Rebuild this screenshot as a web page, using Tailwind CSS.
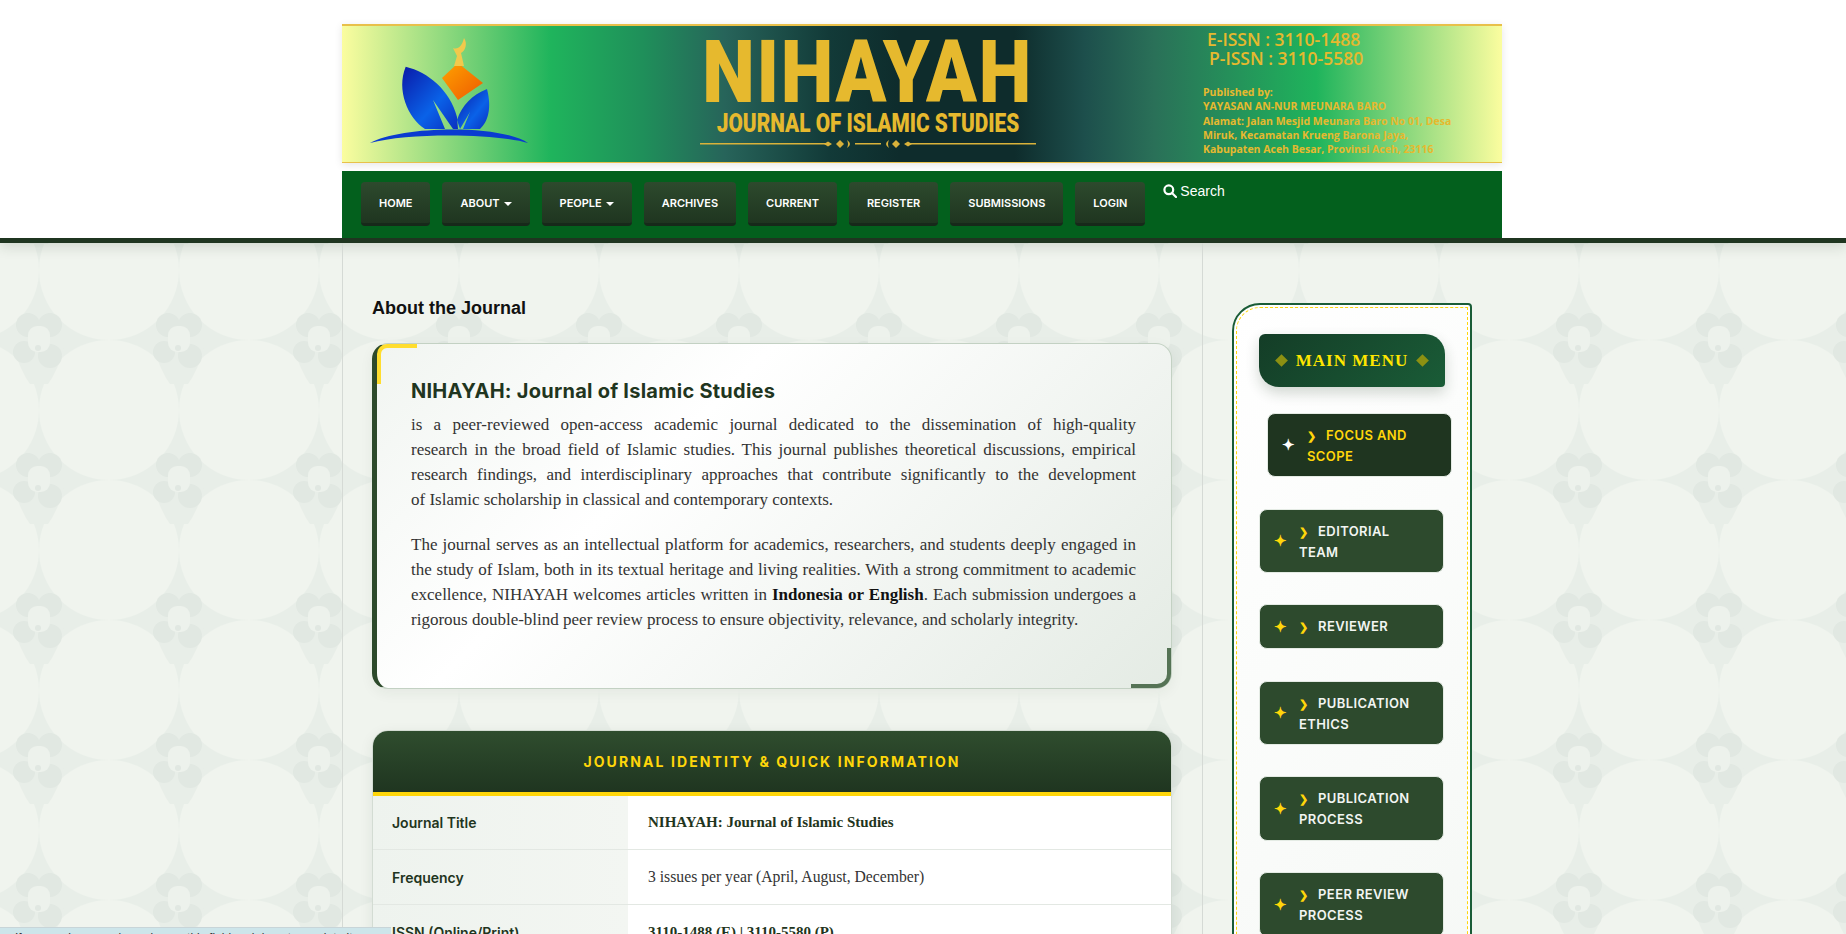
<!DOCTYPE html>
<html lang="en">
<head>
<meta charset="UTF-8">
<title>NIHAYAH: Journal of Islamic Studies</title>
<script src="https://cdn.jsdelivr.net/npm/@tailwindcss/browser@4"></script>
</head>
<body class="relative h-[934px] overflow-hidden bg-[#e8eee8] font-['Liberation_Sans',sans-serif]">

<!-- page background pattern -->
<svg class="absolute inset-0 w-full h-full" aria-hidden="true">
  <defs>
    <pattern id="bgtile" width="140" height="140" patternUnits="userSpaceOnUse">
      <g fill="#f0f4ee">
        <circle cx="109" cy="130" r="70"/>
        <circle cx="-31" cy="130" r="70"/>
        <circle cx="109" cy="-10" r="70"/>
        <circle cx="-31" cy="-10" r="70"/>
      </g>
      <path d="M14 68 Q20 90 30 104 H48 Q58 90 64 68 Z" fill="#e8eee8"/>
      <g fill="#e1e8e2">
        <circle cx="28" cy="45" r="12"/>
        <circle cx="50" cy="45" r="12"/>
        <circle cx="24" cy="72" r="11"/>
        <circle cx="50" cy="76" r="12"/>
      </g>
      <rect x="28" y="46" width="22" height="26" rx="9" fill="#edf2ec"/>
      <circle cx="38" cy="68" r="3" fill="#e1e8e2"/>
    </pattern>
  </defs>
  <rect width="100%" height="100%" fill="url(#bgtile)"/>
</svg>

<div class="relative">
  <!-- header -->
  <header class="bg-white h-[243px] border-b-[5px] border-[#1f3520] shadow-[0_4px_12px_rgba(31,53,32,0.15)]">
    <div class="w-[1160px] ml-[342px] pt-[24px]">
      <div class="h-[139px] flex border-t-[2px] border-b border-[#e8c04a] shadow-[0_2px_8px_rgba(0,0,0,0.1)] bg-[linear-gradient(90deg,#fbfd9f_0%,#1fb45c_18%,#1f8f5a_26%,#27645a_33%,#123a38_42%,#0e2c2c_48%,#0e2c2c_58%,#1d4f4c_64%,#2a7058_70%,#1fb45c_84%,#fbfd9f_100%)]">
        <svg class="ml-[8px] mt-[-6px] shrink-0" width="200" height="140" viewBox="0 0 200 140">
          <defs>
            <linearGradient id="leaf" x1="0" y1="0" x2="1" y2="1">
              <stop offset="0" stop-color="#0a1aa8"/>
              <stop offset="0.6" stop-color="#0a62e8"/>
              <stop offset="1" stop-color="#0a2fc0"/>
            </linearGradient>
            <linearGradient id="dome" x1="0" y1="0" x2="1" y2="1">
              <stop offset="0" stop-color="#ffa200"/>
              <stop offset="1" stop-color="#ee5a00"/>
            </linearGradient>
          </defs>
          <path d="M55.7 46.7 C78 52 100 70 107 97 L108 109 L103 109 L83 80 L95 109 L75 109 C58 98 46 70 55.7 46.7 Z" fill="url(#leaf)"/>
          <path d="M137 69 C142 88 138 102 130 109 L113 109 L120 92 L110 109 L107 100 C112 85 122 75 137 69 Z" fill="url(#leaf)"/>
          <path d="M20 123 C50 106 150 104 178 123 C150 114 60 112 20 123 Z" fill="#0a3bd0"/>
          <path d="M108 43 L133 63 L108 80 L92 58 Z" fill="url(#dome)"/>
          <path d="M104 46 L107 36 L103 28 C108 30 112 26 114 18 C118 24 115 31 111 33 L114 46 Z" fill="#f2c94c"/>
        </svg>
        <div class="ml-[148px] w-[340px] shrink-0 flex flex-col items-center text-[#e6b92e]">
          <div class="font-['Roboto',sans-serif] font-black text-[88px] leading-[72px] mt-[10px] tracking-[2px] whitespace-nowrap scale-x-[.85]">NIHAYAH</div>
          <div class="font-['Roboto',sans-serif] font-black text-[26px] leading-[30px] whitespace-nowrap scale-x-[.8]">JOURNAL OF ISLAMIC STUDIES</div>
          <svg width="336" height="12" viewBox="0 0 336 12" fill="#d9b23a">
            <rect x="0" y="5" width="128" height="1.5"/>
            <path d="M124 6 l4-2.5 l4 2.5 l-4 2.5Z M136 6 l4-4 l4 4 l-4 4Z M147 2 q6 4 0 8 q2-4 0-8Z M155 5 h26 v1.5 h-26Z M189 2 q-6 4 0 8 q-2-4 0-8Z M192 6 l4-4 l4 4 l-4 4Z M204 6 l4-2.5 l4 2.5 l-4 2.5Z"/>
            <rect x="208" y="5" width="128" height="1.5"/>
          </svg>
        </div>
        <div class="ml-[165px] text-[#e6b92e] font-['Open_Sans',sans-serif] font-semibold">
          <div class="pl-[4px] pt-[4px] text-[17.5px] leading-[19px]">
            <div>E-ISSN : 3110-1488</div>
            <div class="pl-[2px]">P-ISSN : 3110-5580</div>
          </div>
          <div class="mt-[17px] text-[10.5px] leading-[14.3px] font-bold">
            Published by:<br>YAYASAN AN-NUR MEUNARA BARO<br>Alamat: Jalan Mesjid Meunara Baro No 01, Desa<br>Miruk, Kecamatan Krueng Barona Jaya,<br>Kabupaten Aceh Besar, Provinsi Aceh, 23116
          </div>
        </div>
      </div>

      <!-- nav -->
      <nav class="mt-[8px] h-[67px] bg-[#03601d] flex items-start pl-[19px] pt-[11px] gap-[12px] text-white">
        <a class="h-[44px] pt-[2px] px-[18px] flex items-center rounded-[4px] border-b-[3px] border-[#17291a] bg-[linear-gradient(180deg,#2d4a2d,#1f3520)] font-['Inter',sans-serif] text-[11px] font-semibold">HOME</a>
        <a class="h-[44px] pt-[2px] px-[18px] flex items-center gap-[4px] rounded-[4px] border-b-[3px] border-[#17291a] bg-[linear-gradient(180deg,#2d4a2d,#1f3520)] font-['Inter',sans-serif] text-[11px] font-semibold">ABOUT <span class="border-t-[4px] border-x-[4px] border-x-transparent border-t-white"></span></a>
        <a class="h-[44px] pt-[2px] px-[18px] flex items-center gap-[4px] rounded-[4px] border-b-[3px] border-[#17291a] bg-[linear-gradient(180deg,#2d4a2d,#1f3520)] font-['Inter',sans-serif] text-[11px] font-semibold">PEOPLE <span class="border-t-[4px] border-x-[4px] border-x-transparent border-t-white"></span></a>
        <a class="h-[44px] pt-[2px] px-[18px] flex items-center rounded-[4px] border-b-[3px] border-[#17291a] bg-[linear-gradient(180deg,#2d4a2d,#1f3520)] font-['Inter',sans-serif] text-[11px] font-semibold">ARCHIVES</a>
        <a class="h-[44px] pt-[2px] px-[18px] flex items-center rounded-[4px] border-b-[3px] border-[#17291a] bg-[linear-gradient(180deg,#2d4a2d,#1f3520)] font-['Inter',sans-serif] text-[11px] font-semibold">CURRENT</a>
        <a class="h-[44px] pt-[2px] px-[18px] flex items-center rounded-[4px] border-b-[3px] border-[#17291a] bg-[linear-gradient(180deg,#2d4a2d,#1f3520)] font-['Inter',sans-serif] text-[11px] font-semibold">REGISTER</a>
        <a class="h-[44px] pt-[2px] px-[18px] flex items-center rounded-[4px] border-b-[3px] border-[#17291a] bg-[linear-gradient(180deg,#2d4a2d,#1f3520)] font-['Inter',sans-serif] text-[11px] font-semibold">SUBMISSIONS</a>
        <a class="h-[44px] pt-[2px] px-[18px] flex items-center rounded-[4px] border-b-[3px] border-[#17291a] bg-[linear-gradient(180deg,#2d4a2d,#1f3520)] font-['Inter',sans-serif] text-[11px] font-semibold">LOGIN</a>
        <a class="ml-[6px] mt-[-1px] flex items-center gap-[3px] text-[14px] leading-[20px]">
          <svg width="14" height="14" viewBox="0 0 14 14" fill="none" stroke="white" stroke-width="2.2"><circle cx="5.8" cy="5.8" r="4.4"/><path d="M9 9 L13 13" stroke-linecap="round"/></svg>
          Search
        </a>
      </nav>
    </div>
  </header>

  <div class="w-[1160px] ml-[342px] flex items-start h-[691px]">
    <!-- main column -->
    <main class="w-[861px] h-full border-x border-[#d5dad5] pl-[29px] pr-[30px] pt-[53px]">
      <h2 class="text-[18px] leading-[24px] font-bold text-[#111]">About the Journal</h2>

      <section class="relative mt-[23px] h-[346px] rounded-[16px] border border-[#c3d1c3] border-l-[5px] border-l-[#2d4a2b] pl-[34px] pr-[35px] pt-[33px] bg-[linear-gradient(135deg,#f1f5f1_0%,#ffffff_35%,#e4ebe4_100%)] shadow-[0_4px_14px_rgba(31,53,32,0.06)]">
        <span class="absolute left-0 top-0 w-[40px] h-[40px] border-l-[4px] border-t-[4px] border-[#ffdd2e] rounded-tl-[10px]"></span>
        <span class="absolute right-0 bottom-0 w-[40px] h-[40px] border-r-[4px] border-b-[4px] border-[#557355] rounded-br-[14px]"></span>
        <h3 class="font-['Inter',sans-serif] font-bold text-[20px] leading-[28px] tracking-[0.25px] text-[#1f3520]">NIHAYAH: Journal of Islamic Studies</h3>
        <!-- lines are set by hand, the serif here runs narrower than the one in the picture -->
        <p class="mt-[7px] font-['Liberation_Serif',serif] text-[17px] leading-[25px] text-[#333] [text-align-last:justify]">
          <span class="block">is a peer-reviewed open-access academic journal dedicated to the dissemination of high-quality</span>
          <span class="block">research in the broad field of Islamic studies. This journal publishes theoretical discussions, empirical</span>
          <span class="block">research findings, and interdisciplinary approaches that contribute significantly to the development</span>
          <span class="block [text-align-last:left]">of Islamic scholarship in classical and contemporary contexts.</span>
        </p>
        <p class="mt-[20px] font-['Liberation_Serif',serif] text-[17px] leading-[25px] text-[#333] [text-align-last:justify]">
          <span class="block">The journal serves as an intellectual platform for academics, researchers, and students deeply engaged in</span>
          <span class="block">the study of Islam, both in its textual heritage and living realities. With a strong commitment to academic</span>
          <span class="block">excellence, NIHAYAH welcomes articles written in <b class="text-[#111]">Indonesia or English</b>. Each submission undergoes a</span>
          <span class="block [text-align-last:left]">rigorous double-blind peer review process to ensure objectivity, relevance, and scholarly integrity.</span>
        </p>
      </section>

      <section class="mt-[41px] rounded-t-[16px] border border-[#d3dcd3] overflow-hidden bg-white shadow-[0_4px_14px_rgba(31,53,32,0.08)]">
        <div class="h-[65px] border-b-[4px] border-[#ffd60a] bg-[linear-gradient(180deg,#2f4d2e,#1f3520)] flex items-center justify-center font-['Inter',sans-serif] font-bold text-[14px] tracking-[2.1px] text-[#ffd60a]">JOURNAL IDENTITY &amp; QUICK INFORMATION</div>
        <div class="flex h-[54px] border-b border-[#e3e8e3] items-stretch">
          <div class="w-[255px] pl-[19px] flex items-center font-['Inter',sans-serif] font-semibold text-[14px] text-[#1f3520] bg-[linear-gradient(90deg,#eef3ee,#f3f6f2)]">Journal Title</div>
          <div class="pl-[20px] flex items-center font-['Liberation_Serif',serif] font-bold text-[15px] text-[#1f3520]">NIHAYAH: Journal of Islamic Studies</div>
        </div>
        <div class="flex h-[55px] border-b border-[#e3e8e3] items-stretch">
          <div class="w-[255px] pl-[19px] flex items-center font-['Inter',sans-serif] font-semibold text-[14px] text-[#1f3520] bg-[linear-gradient(90deg,#eef3ee,#f3f6f2)]">Frequency</div>
          <div class="pl-[20px] flex items-center font-['Liberation_Serif',serif] text-[15.7px] text-[#333]">3 issues per year (April, August, December)</div>
        </div>
        <div class="flex h-[55px] items-stretch">
          <div class="w-[255px] pl-[19px] flex items-center font-['Inter',sans-serif] font-semibold text-[14px] text-[#1f3520] bg-[linear-gradient(90deg,#eef3ee,#f3f6f2)]">ISSN (Online/Print)</div>
          <div class="pl-[20px] flex items-center font-['Liberation_Serif',serif] font-bold text-[15px] text-[#1f3520]">3110-1488 (E) | 3110-5580 (P)</div>
        </div>
      </section>
    </main>

    <!-- sidebar -->
    <aside class="pl-[29px] pt-[60px]">
      <div class="w-[240px] h-[760px] rounded-tl-[28px] rounded-tr-[4px] border-2 border-[#1a5c37] p-[2px] bg-white">
        <div class="h-full rounded-tl-[24px] border border-dashed border-[#ffd60a] pl-[22px] pt-[26px] bg-[linear-gradient(135deg,#ffffff,#f5f8f5)]">
          <div class="w-[186px] h-[53px] flex items-center justify-center gap-[10px] rounded-tl-[6px] rounded-tr-[20px] rounded-bl-[20px] rounded-br-[4px] bg-[linear-gradient(135deg,#143d27,#1a5c37)] shadow-[0_6px_14px_rgba(31,53,32,0.2)]">
            <span class="w-[9px] h-[9px] rotate-45 bg-[#8c9012]"></span>
            <span class="font-['Liberation_Serif',serif] font-bold text-[17px] tracking-[1px] text-[#ffe600]">MAIN MENU</span>
            <span class="w-[9px] h-[9px] rotate-45 bg-[#8c9012]"></span>
          </div>
          <ul class="mt-[26px] w-[185px] font-['Inter',sans-serif] font-semibold text-[13px] leading-[20px] tracking-[0.4px]">
            <li class="relative translate-x-[8px] h-[64px] rounded-[8px] border border-[#e4ebe4] bg-[#1f3520] text-[#ffd60a] pl-[39px] flex items-center">
              <span class="absolute left-[14px] text-white text-[15px]">✦</span>
              <span><span class="mr-[6px] text-[11px]">❯</span> FOCUS AND<br>SCOPE</span>
            </li>
            <li class="relative mt-[32px] h-[64px] rounded-[8px] border border-[#e4ebe4] bg-[#2d4a2d] text-[#f2f5f2] pl-[39px] flex items-center">
              <span class="absolute left-[14px] text-[#ffd60a] text-[15px]">✦</span>
              <span><span class="mr-[6px] text-[11px] text-[#ffd60a]">❯</span> EDITORIAL<br>TEAM</span>
            </li>
            <li class="relative mt-[31px] h-[45px] rounded-[8px] border border-[#e4ebe4] bg-[#2d4a2d] text-[#f2f5f2] pl-[39px] flex items-center">
              <span class="absolute left-[14px] text-[#ffd60a] text-[15px]">✦</span>
              <span><span class="mr-[6px] text-[11px] text-[#ffd60a]">❯</span> REVIEWER</span>
            </li>
            <li class="relative mt-[32px] h-[64px] rounded-[8px] border border-[#e4ebe4] bg-[#2d4a2d] text-[#f2f5f2] pl-[39px] flex items-center">
              <span class="absolute left-[14px] text-[#ffd60a] text-[15px]">✦</span>
              <span><span class="mr-[6px] text-[11px] text-[#ffd60a]">❯</span> PUBLICATION<br>ETHICS</span>
            </li>
            <li class="relative mt-[31px] h-[65px] rounded-[8px] border border-[#e4ebe4] bg-[#2d4a2d] text-[#f2f5f2] pl-[39px] flex items-center">
              <span class="absolute left-[14px] text-[#ffd60a] text-[15px]">✦</span>
              <span><span class="mr-[6px] text-[11px] text-[#ffd60a]">❯</span> PUBLICATION<br>PROCESS</span>
            </li>
            <li class="relative mt-[31px] h-[65px] rounded-[8px] border border-[#e4ebe4] bg-[#2d4a2d] text-[#f2f5f2] pl-[39px] flex items-center">
              <span class="absolute left-[14px] text-[#ffd60a] text-[15px]">✦</span>
              <span><span class="mr-[6px] text-[11px] text-[#ffd60a]">❯</span> PEER REVIEW<br>PROCESS</span>
            </li>
          </ul>
        </div>
      </div>
    </aside>
  </div>
</div>

<!-- notice strip cut off at the bottom of the window -->
<div class="fixed left-0 bottom-0 w-[391px] h-[7px] overflow-hidden bg-[#cde5ea] border-t border-[#c8d5d8] pl-[15px] pt-[2px] text-[12px] leading-[16px] text-[#333] whitespace-nowrap">
  If you are human, please ignore this field and do not complete it
</div>
</body>
</html>
